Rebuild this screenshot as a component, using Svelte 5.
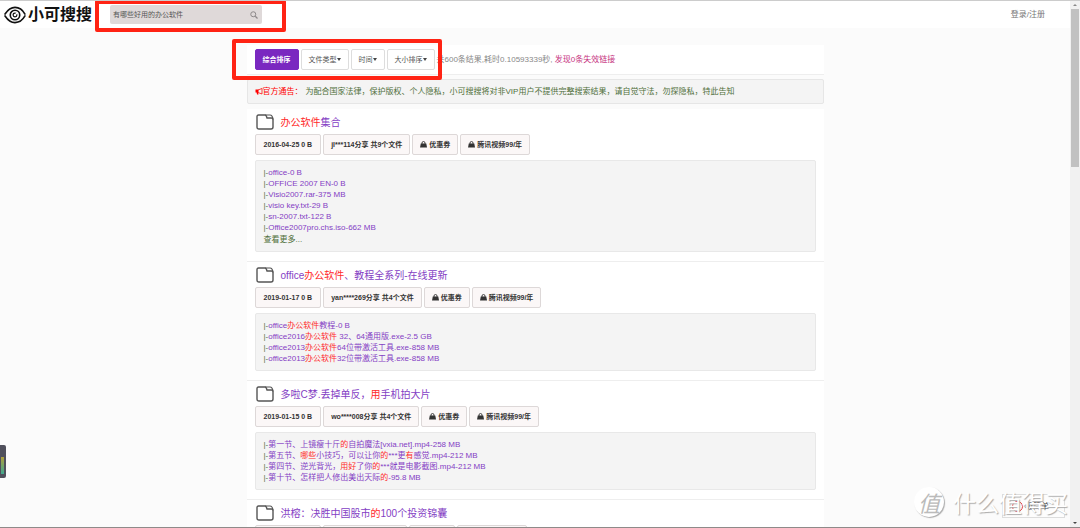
<script lang="ts">
  type Item = {
    title: string;
    date: string;
    share: string;
    files: string[];
    more?: boolean;
  };

  // text between braces is a matched keyword
  const items: Item[] = [
    {
      title: "{办公软件}集合",
      date: "2016-04-25 0 B",
      share: "jl***114分享 共9个文件",
      files: [
        "office-0 B",
        "OFFICE 2007 EN-0 B",
        "Visio2007.rar-375 MB",
        "visio key.txt-29 B",
        "sn-2007.txt-122 B",
        "Office2007pro.chs.iso-662 MB",
      ],
      more: true,
    },
    {
      title: "office{办公软件}、教程全系列-在线更新",
      date: "2019-01-17 0 B",
      share: "yan****269分享 共4个文件",
      files: [
        "office{办公软件}教程-0 B",
        "office2016{办公软件} 32、64通用版.exe-2.5 GB",
        "office2013{办公软件}64位带激活工具.exe-858 MB",
        "office2013{办公软件}32位带激活工具.exe-858 MB",
      ],
    },
    {
      title: "多啦C梦.丢掉单反，{用}手机拍大片",
      date: "2019-01-15 0 B",
      share: "wo****008分享 共4个文件",
      files: [
        "第一节、上镜瘦十斤{的}自拍魔法[vxia.net].mp4-258 MB",
        "第五节、{哪些}小技巧，可以让你{的}***更{有}感觉.mp4-212 MB",
        "第四节、逆光背光，{用好}了你{的}***就是电影截图.mp4-212 MB",
        "第十节、怎样把人修出美出天际{的}-95.8 MB",
      ],
    },
    {
      title: "洪榕：决胜中国股市{的}100个投资锦囊",
      date: "2019-01-15 0 B",
      share: "yu***5分享 共4个文件",
      files: [],
    },
  ];

  const filters = ["文件类型", "时间", "大小排序"];
  let query = $state("有哪些好用的办公软件");

  function parts(text: string) {
    return text.split(/[{}]/).map((t, i) => ({ t, hit: i % 2 === 1 }));
  }
</script>

{#snippet marked(text: string)}
  {#each parts(text) as p}{#if p.hit}<em>{p.t}</em>{:else}{p.t}{/if}{/each}
{/snippet}

{#snippet bag()}
  <svg class="bag" viewBox="0 0 14 14" aria-hidden="true">
    <path d="M1.500 5h11L14 13H0z" fill="#333" />
    <path d="M4 6V4a3 3 0 0 1 6 0v2" fill="none" stroke="#333" stroke-width="1.800" />
  </svg>
{/snippet}

<div class="screen">
  <div class="page">
    <header>
      <a class="logo" href="#home">
        <svg viewBox="0 0 46 38" aria-hidden="true">
          <g fill="none" stroke="#111" stroke-width="3.400" stroke-linecap="round">
            <path d="M2 17C8 8 15 3 23 3c9 0 16 5 21 14" />
            <path d="M2 21c6 9 13 14 21 14 9 0 16-5 21-14" />
            <circle cx="23" cy="19" r="10" />
            <circle cx="23" cy="19" r="4" stroke-width="2.500" />
          </g>
          <circle cx="26" cy="16" r="2" fill="#fff" />
        </svg>
        <span>小可搜搜</span>
      </a>
      <form class="search" onsubmit={(e) => e.preventDefault()}>
        <input type="text" aria-label="搜索" bind:value={query} />
        <button type="submit" aria-label="搜索">
          <svg viewBox="0 0 16 16" aria-hidden="true">
            <circle cx="6.5" cy="6.5" r="5" fill="none" stroke="#8d8889" stroke-width="2" />
            <path d="M10.5 10.5L15 15" stroke="#8d8889" stroke-width="2.4" />
          </svg>
        </button>
        <span class="frame"></span>
      </form>
      <a class="login" href="#login">登录/注册</a>
    </header>

    <main>
      <div class="toolbar">
        <div class="sort">
          <button class="active">综合排序</button>
          {#each filters as f}
            <button>{f}<i class="caret"></i></button>
          {/each}
          <span class="frame"></span>
        </div>
        <p>共600条结果,耗时0.10593339秒, <a href="#dead">发现0条失效链接</a></p>
      </div>

      <div class="notice">
        <strong>
          <svg viewBox="0 0 16 14" aria-hidden="true">
            <path d="M1 3h6v6H1zM3 8h3l1 5H4z" fill="#f00" />
            <path d="M6 4L14 1v11L6 9" fill="none" stroke="#f00" stroke-width="1.500" />
          </svg>官方通告：
        </strong>
        <span>为配合国家法律，保护版权、个人隐私，小可搜搜将对非VIP用户不提供完整搜索结果，请自觉守法，勿探隐私，特此告知</span>
      </div>

      <div class="results">
        {#each items as item}
          <article>
            <h2>
              <svg viewBox="0 0 36 32" aria-hidden="true">
                <path
                  d="M5 2h13q2 0 3 3l1 3h9q3 0 3 3v15q0 4-4 4H6q-4 0-4-4V5q0-3 3-3z"
                  fill="none" stroke="#555" stroke-width="2.800" />
                <path d="M18 2h10q5 0 6 9" fill="none" stroke="#555" stroke-width="2.400" />
              </svg>
              <a href="#item">{@render marked(item.title)}</a>
            </h2>
            <div class="tags">
              <button class="date">{item.date}</button>
              <button>{item.share}</button>
              <button>{@render bag()}优惠券</button>
              <button>{@render bag()}腾讯视频99/年</button>
            </div>
            <ul>
              {#each item.files as f}
                <li>|-<a href="#file">{@render marked(f)}</a></li>
              {/each}
              {#if item.more}<li class="more">查看更多...</li>{/if}
            </ul>
          </article>
        {/each}
      </div>
    </main>
  </div>

  <div class="scrollbar">
    <i class="up"></i>
    <div class="thumb"></div>
    <i class="down"></i>
  </div>

  <div class="meter"><i></i></div>

  <div class="ime"><i></i>极简单</div>

  <div class="watermark">
    <b>值</b>
    <span>什么值得买</span>
  </div>
</div>

<style>
  :global(body) {
    margin: 0;
  }
  .screen {
    display: flex;
    position: relative;
    height: 100vh;
    box-sizing: border-box;
    overflow: hidden;
    border-top: 1px solid #ccc;
    border-bottom: 1px solid #8e8a89;
    background: #fbfbfb;
    color: #4f6f3a;
    font: 8px/11px "Liberation Sans", "Noto Sans CJK SC", sans-serif;
  }
  .page {
    flex: 1;
    min-width: 0;
  }
  a {
    color: inherit;
    text-decoration: none;
  }
  button,
  input {
    font: inherit;
    color: inherit;
    margin: 0;
  }
  em {
    font-style: normal;
    color: #ff2a2a;
  }
  .frame {
    position: absolute;
    border: 4px solid #ff2314;
    border-radius: 2px;
    pointer-events: none;
    z-index: 2;
  }

  header {
    display: flex;
    align-items: center;
    height: 27px;
    padding: 0 25px 0 4px;
    background: #fff;
  }
  .logo {
    display: flex;
    align-items: center;
    gap: 2px;
    width: 106px;
    color: #111;
    font: bold 16px/20px "Noto Sans CJK SC", sans-serif;
    white-space: nowrap;
  }
  .logo svg {
    width: 22px;
    height: 18px;
  }
  .logo span {
    padding-bottom: 3px;
  }
  .search {
    display: flex;
    align-items: center;
    position: relative;
    width: 152px;
    height: 19px;
    border-radius: 2px;
    background: #dfd9d9;
    color: #555;
    font-size: 7px;
  }
  .search input {
    flex: 1;
    min-width: 0;
    padding: 0 3px;
    border: 0;
    background: none;
    outline: none;
  }
  .search button {
    width: 15px;
    height: 15px;
    padding: 3px;
    border: 0;
    background: none;
  }
  .search svg {
    display: block;
    width: 8px;
    height: 8px;
  }
  .search .frame {
    inset: -5px -24px -8px -15px;
  }
  .login {
    margin-left: auto;
    color: #777;
  }

  main {
    max-width: 577px;
    margin: 0 auto;
    padding-top: 17px;
  }
  .toolbar {
    display: flex;
    align-items: center;
    gap: 2px;
    padding: 4px 8px;
    border-bottom: 1px solid #eee;
    background: #fff;
    color: #888;
  }
  .toolbar p {
    margin: 0;
  }
  .toolbar p a {
    color: #c7357f;
  }
  .sort {
    display: flex;
    position: relative;
    gap: 2px;
  }
  .sort button {
    display: flex;
    align-items: center;
    height: 21px;
    padding: 0 7px;
    border: 1px solid #ddd;
    border-radius: 2px;
    background: #fff;
    color: #555;
    font-size: 7px;
    white-space: nowrap;
  }
  .sort .active {
    border-color: #7a28c0;
    background: #7a28c0;
    color: #fff;
    font-weight: bold;
  }
  .caret {
    border: 2px solid transparent;
    border-top: 3px solid #444;
    border-bottom: 0;
  }
  .sort .frame {
    inset: -10px -7px -10px -23px;
  }

  .notice {
    display: flex;
    gap: 3px;
    margin-top: 4px;
    padding: 6px 7px;
    border: 1px solid #e6e6e6;
    border-radius: 2px;
    background: #f4f4f4;
  }
  .notice strong {
    color: #f00;
    font-weight: normal;
    white-space: nowrap;
  }
  .notice svg {
    width: 8px;
    height: 7px;
    vertical-align: -1px;
  }

  .results {
    margin-top: 5px;
    background: #fff;
  }
  article {
    padding: 5px 8px 9px;
    border-bottom: 1px solid #eee;
  }
  h2 {
    display: flex;
    align-items: center;
    gap: 7px;
    height: 16px;
    margin: 0;
    padding-left: 1px;
    color: #8440c4;
    font-size: 10px;
    font-weight: normal;
  }
  h2 svg {
    width: 18px;
    height: 16px;
  }
  .tags {
    display: flex;
    gap: 2px;
    margin-top: 4px;
  }
  .tags button {
    display: flex;
    align-items: center;
    gap: 2px;
    height: 21px;
    padding: 0 7px;
    border: 1px solid #ddd8d8;
    border-radius: 2px;
    background: #fbf7f7;
    color: #333;
    font-size: 7px;
    font-weight: bold;
    white-space: nowrap;
  }
  .tags .date {
    padding: 0 8px;
  }
  .bag {
    width: 7px;
    height: 7px;
  }
  ul {
    margin: 5px 0 0;
    padding: 6px 8px;
    border: 1px solid #e8e8e8;
    border-radius: 2px;
    background: #f4f4f4;
    list-style: none;
  }
  li {
    white-space: nowrap;
  }
  li.more {
    padding-top: 1px;
  }
  li a {
    color: #8440c4;
  }

  .scrollbar {
    display: flex;
    flex-direction: column;
    align-items: center;
    width: 10px;
    background: #f1f1f1;
  }
  .up,
  .down {
    margin: 3px 0;
    border: 2px solid transparent;
  }
  .up {
    border-top: 0;
    border-bottom-color: #888;
  }
  .down {
    margin-top: auto;
    border-bottom: 0;
    border-top-color: #444;
  }
  .thumb {
    width: 8px;
    height: 30%;
    background: #c1c1c1;
  }

  .meter {
    position: absolute;
    left: 0;
    top: 444px;
    width: 6px;
    height: 33px;
    border-radius: 0 2px 2px 0;
    background: #50505c;
  }
  .meter i {
    display: block;
    width: 3px;
    height: 17px;
    margin: 12px 0 0 1px;
    background: linear-gradient(#b0a03c, #40a890);
  }

  .ime {
    display: flex;
    align-items: center;
    gap: 2px;
    position: absolute;
    right: 15px;
    bottom: 9px;
    width: 52px;
    height: 22px;
    padding-left: 9px;
    border: 1px solid #ddd;
    background: #fdfdfd;
    color: #444;
  }
  .ime i {
    width: 9px;
    height: 9px;
    border: 1px solid #e04040;
    border-radius: 50%;
  }
  .watermark {
    display: flex;
    align-items: center;
    gap: 9px;
    position: absolute;
    right: 12px;
    bottom: 10px;
    color: #fff;
    font: 23px/30px "Noto Sans CJK SC", sans-serif;
    text-shadow: 1px 1px 1px #aaa;
    white-space: nowrap;
  }
  .watermark b {
    width: 30px;
    border-radius: 50%;
    background: #fff;
    box-shadow: 1px 1px 1px #aaa;
    color: #bbb;
    font-size: 22px;
    font-style: italic;
    font-weight: normal;
    text-align: center;
    text-shadow: none;
  }
</style>
